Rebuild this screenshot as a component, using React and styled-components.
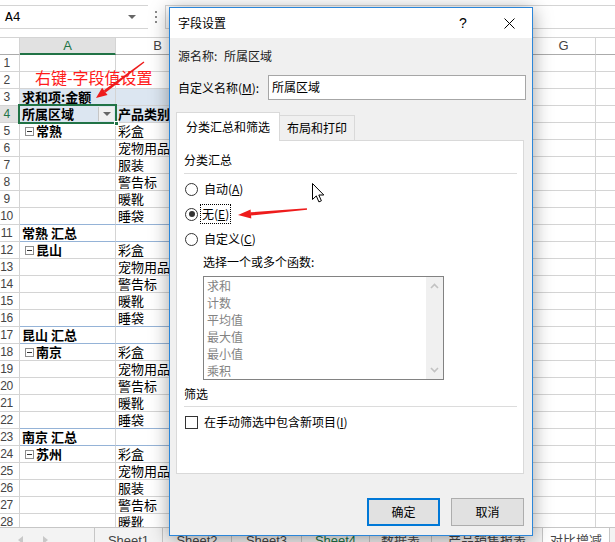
import React from 'react';
import styled, { createGlobalStyle } from 'styled-components';

const CJK = '"Noto Sans CJK SC", "Noto Sans", sans-serif';
const LATIN = '"Liberation Sans", Arial, sans-serif';

const GlobalStyle = createGlobalStyle`
  html, body { margin: 0; padding: 0; background: #ffffff; }
  body { font-family: ${CJK}; color: #000; }
  *, *::before, *::after { box-sizing: border-box; }
`;

const columns = [
  { id: 'A', width: 96 },
  { id: 'B', width: 84 },
  { id: 'C', width: 83 },
  { id: 'D', width: 83 },
  { id: 'E', width: 83 },
  { id: 'F', width: 83 },
  { id: 'G', width: 64 },
  { id: 'H', width: 64 },
];

const rows = [
  {},
  {},
  { a: '求和项:金额', head: true },
  { a: '所属区域', b: '产品类别', head: true, filter: true },
  { group: '常熟', b: '彩盒' },
  { b: '宠物用品' },
  { b: '服装' },
  { b: '警告标' },
  { b: '暖靴' },
  { b: '睡袋', line: true },
  { a: '常熟 汇总', total: true, line: true },
  { group: '昆山', b: '彩盒' },
  { b: '宠物用品' },
  { b: '警告标' },
  { b: '暖靴' },
  { b: '睡袋', line: true },
  { a: '昆山 汇总', total: true, line: true },
  { group: '南京', b: '彩盒' },
  { b: '宠物用品' },
  { b: '警告标' },
  { b: '暖靴' },
  { b: '睡袋', line: true },
  { a: '南京 汇总', total: true, line: true },
  { group: '苏州', b: '彩盒' },
  { b: '宠物用品' },
  { b: '服装' },
  { b: '警告标' },
  { b: '暖靴' },
];

const sheetTabs = [
  { label: 'Sheet1', width: 68 },
  { label: 'Sheet2', width: 69 },
  { label: 'Sheet3', width: 70 },
  { label: 'Sheet4', width: 68, green: true },
  { label: '数据表', width: 62 },
  { label: '产品销售报表', width: 111 },
  { label: '对比增减', width: 67, active: true },
];

const functions = ['求和', '计数', '平均值', '最大值', '最小值', '乘积'];

const Screen = styled.div`
  position: relative;
  width: 615px;
  height: 542px;
  overflow: hidden;
  display: flex;
  flex-direction: column;
  background: #fff;
`;

/* formula bar */

const FormulaBar = styled.div`
  flex: none;
  height: 38px;
  display: flex;
  align-items: flex-start;
  padding-top: 5px;
`;

const NameBox = styled.div`
  width: 148px;
  height: 24px;
  border-top: 1px solid #d4d4d4;
  border-bottom: 1px solid #d4d4d4;
  display: flex;
  align-items: center;
  justify-content: space-between;
  padding: 0 12px 0 5px;
  font: 13px "Liberation Mono", monospace;
  color: #000;
`;

const Caret = styled.span`
  width: 0;
  height: 0;
  border-left: 4px solid transparent;
  border-right: 4px solid transparent;
  border-top: 4px solid #666;
`;

const Dots = styled.div`
  height: 24px;
  width: 2px;
  margin-left: 7px;
  display: flex;
  flex-direction: column;
  justify-content: center;
  gap: 3px;

  span {
    width: 2px;
    height: 2px;
    background: #8a8a8a;
  }
`;

const FormulaInput = styled.div`
  flex: 1;
  height: 24px;
  margin-left: 8px;
  border-top: 1px solid #d4d4d4;
  border-bottom: 1px solid #d4d4d4;
  border-left: 1px solid #d4d4d4;
`;

/* grid */

const HeaderRow = styled.div`
  flex: none;
  height: 17px;
  display: flex;
  border-top: 1px solid #d4d4d4;
  box-sizing: content-box;
  margin-top: -1px;
`;

const Corner = styled.div`
  flex: none;
  width: 20px;
  height: 17px;
  border-right: 1px solid #d4d4d4;
  border-bottom: 1px solid #ababab;
`;

const ColHead = styled.div`
  flex: none;
  width: ${({ $w }) => $w}px;
  height: 17px;
  border-right: 1px solid #d4d4d4;
  border-bottom: ${({ $active }) => ($active ? '2px solid #217346' : '1px solid #ababab')};
  background: ${({ $active }) => ($active ? '#e1e1e1' : '#fff')};
  color: ${({ $active }) => ($active ? '#217346' : '#444')};
  font: 13px ${LATIN};
  line-height: 16px;
  text-align: center;
`;

const Grid = styled.div`
  flex: 1;
  min-height: 0;
  overflow: hidden;
  display: flex;
  flex-direction: column;
`;

const RowLine = styled.div`
  flex: none;
  height: 17px;
  display: flex;
`;

const RowHead = styled.div`
  flex: none;
  width: 20px;
  height: 17px;
  padding-right: 6px;
  border-right: 1px solid #d4d4d4;
  border-bottom: 1px solid #d4d4d4;
  background: ${({ $active }) => ($active ? '#e1e1e1' : '#fff')};
  color: ${({ $active }) => ($active ? '#217346' : '#444')};
  font: 12px ${LATIN};
  letter-spacing: -0.5px;
  line-height: 16px;
  text-align: center;
  white-space: nowrap;
`;

const Cell = styled.div`
  position: relative;
  flex: none;
  width: ${({ $w }) => $w}px;
  height: 17px;
  display: flex;
  align-items: center;
  padding-left: 2px;
  border-right: 1px solid #d4d4d4;
  border-bottom: 1px solid ${({ $line }) => ($line ? '#95b3d7' : '#d4d4d4')};
  background: ${({ $fill }) => ($fill ? '#dce6f1' : '#fff')};
  font-size: 13px;
  line-height: 16px;
  font-weight: ${({ $bold }) => ($bold ? 700 : 400)};
  white-space: nowrap;

  ${({ $selected }) =>
    $selected &&
    `
    z-index: 2;
    &::after {
      content: '';
      position: absolute;
      left: -2px;
      top: -2px;
      right: -2px;
      bottom: -2px;
      border: 2px solid #217346;
    }
    &::before {
      content: '';
      position: absolute;
      right: -4px;
      bottom: -4px;
      width: 5px;
      height: 5px;
      background: #217346;
      border: 1px solid #fff;
      z-index: 1;
    }
  `}
`;

const Toggle = styled.span`
  position: relative;
  flex: none;
  width: 9px;
  height: 9px;
  margin: 0 2px 0 3px;
  border: 1px solid #8c8c8c;
  background: #fff;

  &::after {
    content: '';
    position: absolute;
    left: 1px;
    top: 3px;
    width: 5px;
    height: 1px;
    background: #333;
  }
`;

const FilterButton = styled.span`
  flex: none;
  width: 16px;
  height: 14px;
  margin-left: auto;
  margin-right: 1px;
  border-left: 1px solid #c6c6c6;
  background: #f0f0f0;
  display: flex;
  align-items: center;
  justify-content: center;

  &::after {
    content: '';
    border-left: 4px solid transparent;
    border-right: 4px solid transparent;
    border-top: 4px solid #666;
  }
`;

/* sheet tabs */

const TabBar = styled.div`
  flex: none;
  height: 15px;
  display: flex;
  border-top: 1px solid #c6c6c6;
  background: #f3f3f3;
  overflow: hidden;
`;

const TabNav = styled.div`
  flex: none;
  width: 95px;
  display: flex;
  gap: 20px;
  padding: 8px 0 0 18px;
  border-right: 1px solid #c6c6c6;

  span {
    width: 0;
    height: 0;
    border-top: 4px solid transparent;
    border-bottom: 4px solid transparent;
  }
  span:first-child {
    border-right: 5px solid #c8c8c8;
  }
  span:last-child {
    border-left: 5px solid #c8c8c8;
  }
`;

const SheetTab = styled.div`
  flex: none;
  width: ${({ $w }) => $w}px;
  border-right: 1px solid #c6c6c6;
  padding-top: 5px;
  text-align: center;
  font: 13px ${LATIN}, ${CJK};
  line-height: 16px;
  white-space: nowrap;
  overflow: hidden;
  color: ${({ $green }) => ($green ? '#217346' : '#444')};
  background: ${({ $active }) => ($active ? '#fff' : 'transparent')};
`;

/* overlays on the sheet */

const Annotation = styled.div`
  position: absolute;
  left: 35px;
  top: 68px;
  font-size: 16px;
  line-height: 18px;
  color: #ff1a1a;
  white-space: nowrap;
`;

const Overlay = styled.svg`
  position: absolute;
  overflow: visible;
  z-index: 5;
`;

/* dialog */

const Dialog = styled.div`
  position: absolute;
  left: 169px;
  top: 7px;
  width: 364px;
  height: 529px;
  border: 1px solid #2b86d9;
  background: #f0f0f0;
  box-shadow: 0 3px 18px rgba(0, 0, 0, 0.38);
  display: flex;
  flex-direction: column;
  font-size: 12px;
  z-index: 3;
`;

const TitleBar = styled.div`
  flex: none;
  height: 30px;
  background: #fff;
  display: flex;
  align-items: center;
  padding-left: 8px;
`;

const Title = styled.div`
  flex: 1;
  font-size: 12px;
  line-height: 16px;
`;

const TitleButton = styled.div`
  width: 46px;
  height: 30px;
  display: flex;
  align-items: center;
  justify-content: center;
  font: 14px ${LATIN};
  color: #000;
`;

const DialogBody = styled.div`
  flex: 1;
  display: flex;
  flex-direction: column;
  padding: 10px 8px 0 6px;
`;

const InfoRow = styled.div`
  display: flex;
  padding-left: 2px;
  line-height: 16px;
  color: #222;
`;

const InfoLabel = styled.span`
  width: 46px;
`;

const NameRow = styled.div`
  margin-top: 11px;
  height: 25px;
  display: flex;
  align-items: center;
`;

const NameLabel = styled.label`
  flex: none;
  width: 92px;
  padding-left: 2px;
  line-height: 16px;
`;

const NameInput = styled.div`
  flex: 1;
  height: 25px;
  margin-right: -2px;
  border: 1px solid #a6a6a6;
  background: #fff;
  padding-left: 3px;
  line-height: 22px;
`;

const TabStrip = styled.div`
  position: relative;
  z-index: 1;
  margin-top: 12px;
  margin-bottom: -1px;
  height: 29px;
  display: flex;
  align-items: flex-end;
`;

const Tab = styled.div`
  height: ${({ $active }) => ($active ? 29 : 26)}px;
  padding: 0 ${({ $active }) => ($active ? 9 : 7)}px;
  display: flex;
  align-items: center;
  line-height: 16px;
  background: ${({ $active }) => ($active ? '#fff' : '#f0f0f0')};
  border: 1px solid #d9d9d9;
  border-bottom: ${({ $active }) => ($active ? 'none' : '1px solid #d9d9d9')};
  border-left: ${({ $active }) => ($active ? '1px solid #d9d9d9' : 'none')};
`;

const TabPanel = styled.div`
  flex: none;
  height: 334px;
  border: 1px solid #d9d9d9;
  background: #fff;
  padding: 0 6px 0 7px;
  display: flex;
  flex-direction: column;
`;

const GroupTitle = styled.div`
  margin-top: ${({ $gap }) => $gap}px;
  line-height: 16px;
`;

const Rule = styled.div`
  margin-top: ${({ $gap }) => $gap}px;
  height: 1px;
  background: #dcdcdc;
`;

const OptionRow = styled.div`
  margin-top: 5px;
  height: 20px;
  display: flex;
  align-items: center;
`;

const RadioCircle = styled.span`
  position: relative;
  flex: none;
  width: 13px;
  height: 13px;
  margin-left: 1px;
  border: 1px solid #333;
  border-radius: 50%;
  background: #fff;

  ${({ $checked }) =>
    $checked &&
    `
    &::after {
      content: '';
      position: absolute;
      left: 2.5px;
      top: 2.5px;
      width: 6px;
      height: 6px;
      border-radius: 50%;
      background: #333;
    }
  `}
`;

const CheckSquare = styled.span`
  flex: none;
  width: 13px;
  height: 13px;
  margin-left: 1px;
  border: 1px solid #333;
  background: #fff;
`;

const OptionLabel = styled.span`
  margin-left: ${({ $focus }) => ($focus ? 2 : 4)}px;
  padding: 0 1px;
  line-height: 18px;
  border: 1px dotted ${({ $focus }) => ($focus ? '#000' : 'transparent')};
`;

const FuncLabel = styled.div`
  margin-top: 5px;
  padding-left: 19px;
  line-height: 16px;
`;

const ListBox = styled.div`
  margin: 6px 0 0 19px;
  width: 241px;
  height: 104px;
  border: 1px solid #828282;
  display: flex;
`;

const ListItems = styled.div`
  flex: 1;
  padding-left: 3px;
`;

const ListItem = styled.div`
  height: 17px;
  line-height: 17px;
  color: #838383;
`;

const ScrollTrack = styled.div`
  flex: none;
  width: 17px;
  background: #f0f0f0;
  display: flex;
  flex-direction: column;
  justify-content: space-between;
  align-items: center;
  padding: 6px 0;
`;

const ButtonRow = styled.div`
  margin-top: 24px;
  display: flex;
  justify-content: flex-end;
  gap: 11px;
`;

const DialogButton = styled.div`
  width: 73px;
  height: 28px;
  display: flex;
  align-items: center;
  justify-content: center;
  background: #e1e1e1;
  border: ${({ $primary }) => ($primary ? '2px solid #0078d7' : '1px solid #adadad')};
  line-height: 16px;
`;

const Chevron = ({ down }) => (
  <svg width="9" height="6" viewBox="0 0 9 6">
    <path
      d={down ? 'M1 1 L4.5 4.5 L8 1' : 'M1 5 L4.5 1.5 L8 5'}
      fill="none"
      stroke="#c2c2c2"
      strokeWidth="1.6"
    />
  </svg>
);

function SheetRow({ n, row }) {
  return (
    <RowLine>
      <RowHead $active={n === 4}>{n}</RowHead>
      {columns.map((col, i) => {
        const pivot = i < 2;
        let content = null;
        if (i === 0) {
          content = row.group ? (
            <>
              <Toggle />
              {row.group}
            </>
          ) : (
            row.a
          );
        } else if (i === 1) {
          content = row.b;
        }
        return (
          <Cell
            key={col.id}
            $w={col.width}
            $fill={pivot && row.head}
            $line={pivot && row.line}
            $bold={row.head || row.total || (i === 0 && row.group)}
            $selected={n === 4 && i === 0}
          >
            {content}
            {i === 0 && row.filter && <FilterButton />}
          </Cell>
        );
      })}
    </RowLine>
  );
}

export default function App() {
  return (
    <>
      <GlobalStyle />
      <Screen>
        <FormulaBar>
          <NameBox>
            <span>A4</span>
            <Caret />
          </NameBox>
          <Dots>
            <span />
            <span />
            <span />
          </Dots>
          <FormulaInput />
        </FormulaBar>

        <HeaderRow>
          <Corner />
          {columns.map((col) => (
            <ColHead key={col.id} $w={col.width} $active={col.id === 'A'}>
              {col.id}
            </ColHead>
          ))}
        </HeaderRow>

        <Grid>
          {rows.map((row, i) => (
            <SheetRow key={i} n={i + 1} row={row} />
          ))}
        </Grid>

        <TabBar>
          <TabNav>
            <span />
            <span />
          </TabNav>
          {sheetTabs.map((t) => (
            <SheetTab key={t.label} $w={t.width} $green={t.green} $active={t.active}>
              {t.label}
            </SheetTab>
          ))}
        </TabBar>

        <Annotation>右键-字段值设置</Annotation>
        <Overlay style={{ left: 90, top: 58 }} width="60" height="46" viewBox="0 0 60 46">
          <polygon points="54.4,4.6 53.6,3.4 13.9,32.2 15.7,34.6" fill="#ee1c1c" />
          <polygon points="6,40 17.5,37 12.1,29.8" fill="#ee1c1c" />
        </Overlay>

        <Dialog>
          <TitleBar>
            <Title>字段设置</Title>
            <TitleButton>?</TitleButton>
            <TitleButton>
              <svg width="11" height="11" viewBox="0 0 11 11">
                <path d="M0.5 0.5 L10.5 10.5 M10.5 0.5 L0.5 10.5" stroke="#000" strokeWidth="1" />
              </svg>
            </TitleButton>
          </TitleBar>

          <DialogBody>
            <InfoRow>
              <InfoLabel>源名称:</InfoLabel>
              <span>所属区域</span>
            </InfoRow>

            <NameRow>
              <NameLabel>
                自定义名称(<u>M</u>):
              </NameLabel>
              <NameInput>所属区域</NameInput>
            </NameRow>

            <TabStrip>
              <Tab $active>分类汇总和筛选</Tab>
              <Tab>布局和打印</Tab>
            </TabStrip>

            <TabPanel>
              <GroupTitle $gap={11}>分类汇总</GroupTitle>
              <Rule $gap={5} />
              <OptionRow>
                <RadioCircle />
                <OptionLabel>
                  自动(<u>A</u>)
                </OptionLabel>
              </OptionRow>
              <OptionRow>
                <RadioCircle $checked />
                <OptionLabel $focus>
                  无(<u>E</u>)
                </OptionLabel>
              </OptionRow>
              <OptionRow>
                <RadioCircle />
                <OptionLabel>
                  自定义(<u>C</u>)
                </OptionLabel>
              </OptionRow>
              <FuncLabel>选择一个或多个函数:</FuncLabel>
              <ListBox>
                <ListItems>
                  {functions.map((f) => (
                    <ListItem key={f}>{f}</ListItem>
                  ))}
                </ListItems>
                <ScrollTrack>
                  <Chevron />
                  <Chevron down />
                </ScrollTrack>
              </ListBox>
              <GroupTitle $gap={6}>筛选</GroupTitle>
              <Rule $gap={4} />
              <OptionRow>
                <CheckSquare />
                <OptionLabel>
                  在手动筛选中包含新项目(<u>I</u>)
                </OptionLabel>
              </OptionRow>
            </TabPanel>

            <ButtonRow>
              <DialogButton $primary>确定</DialogButton>
              <DialogButton>取消</DialogButton>
            </ButtonRow>
          </DialogBody>
        </Dialog>

        <Overlay style={{ left: 234, top: 202 }} width="78" height="20" viewBox="0 0 78 20">
          <polygon points="73.1,7.8 72.9,6.2 16.8,10.3 17.1,13.5" fill="#ee1c1c" />
          <polygon points="4,13 17.3,16.4 16.6,7.4" fill="#ee1c1c" />
        </Overlay>

        <Overlay style={{ left: 312, top: 183 }} width="13" height="20" viewBox="0 0 13 20">
          <path
            d="M0.5 0.5 V16.5 L4.3 12.9 L6.9 18.9 L9.4 17.8 L6.8 12 H11.8 Z"
            fill="#fff"
            stroke="#000"
            strokeWidth="1"
            strokeLinejoin="miter"
          />
        </Overlay>
      </Screen>
    </>
  );
}
